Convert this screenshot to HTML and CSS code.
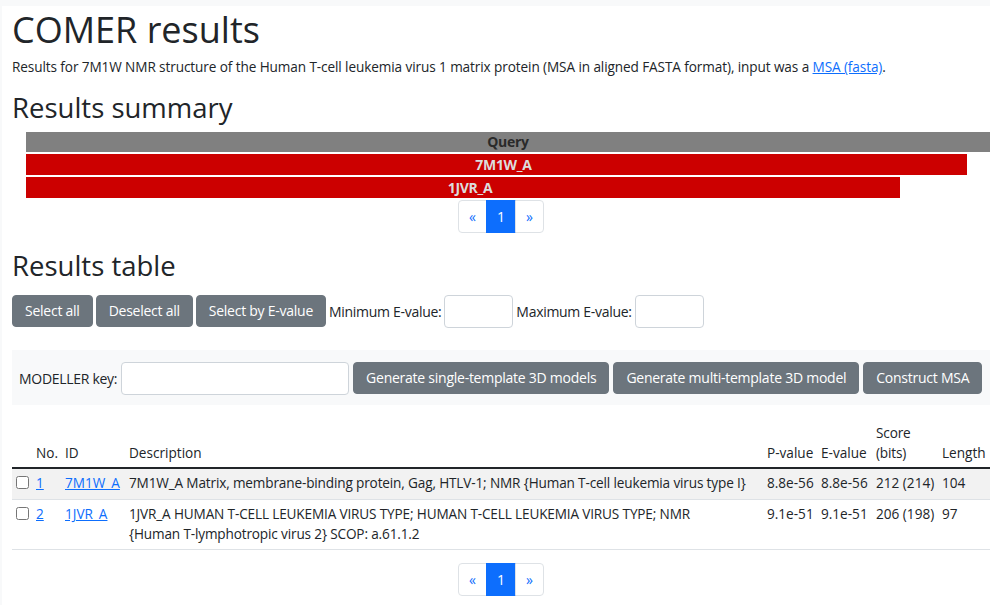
FILE: index.html
```html
<!DOCTYPE html>
<html lang="en">
<head>
<meta charset="utf-8">
<title>COMER results</title>
<link rel="stylesheet" href="styles.css">
</head>
<body>
<div class="page">
  <h1 class="title">COMER results</h1>
  <p class="intro">Results for 7M1W NMR structure of the Human T-cell leukemia virus 1 matrix protein (MSA in aligned FASTA format), input was a <a href="#">MSA (fasta)</a>.</p>

  <h2 class="section">Results summary</h2>
  <div class="summary">
    <div class="bar bar-query">Query</div>
    <div class="bar bar-hit" style="width:941px">7M1W_A</div>
    <div class="bar bar-hit" style="width:874px">1JVR_A</div>
  </div>
  <nav class="pager">
    <a class="pg" href="#">&laquo;</a><a class="pg active" href="#">1</a><a class="pg" href="#">&raquo;</a>
  </nav>

  <h2 class="section section-table">Results table</h2>
  <div class="select-row">
    <button class="btn">Select all</button>
    <button class="btn">Deselect all</button>
    <button class="btn">Select by E-value</button>
    <label class="lbl">Minimum E-value:</label>
    <input class="inp inp-sm" type="text">
    <label class="lbl">Maximum E-value:</label>
    <input class="inp inp-sm" type="text">
  </div>

  <div class="modeller">
    <label class="lbl">MODELLER key:</label>
    <input class="inp inp-key" type="text">
    <button class="btn">Generate single-template 3D models</button>
    <button class="btn">Generate multi-template 3D model</button>
    <button class="btn">Construct MSA</button>
  </div>

  <table class="results">
    <colgroup>
      <col class="c-chk"><col class="c-no"><col class="c-id"><col class="c-desc"><col class="c-p"><col class="c-e"><col class="c-score"><col class="c-len">
    </colgroup>
    <thead>
      <tr>
        <th></th><th>No.</th><th>ID</th><th>Description</th><th>P-value</th><th>E-value</th><th class="wrap">Score (bits)</th><th>Length</th>
      </tr>
    </thead>
    <tbody>
      <tr class="odd">
        <td><input type="checkbox" class="chk"></td>
        <td><a href="#">1</a></td>
        <td><a href="#">7M1W_A</a></td>
        <td class="wrap">7M1W_A Matrix, membrane-binding protein, Gag, HTLV-1; NMR {Human T-cell leukemia virus type I}</td>
        <td>8.8e-56</td><td>8.8e-56</td><td>212 (214)</td><td>104</td>
      </tr>
      <tr>
        <td><input type="checkbox" class="chk"></td>
        <td><a href="#">2</a></td>
        <td><a href="#">1JVR_A</a></td>
        <td class="wrap">1JVR_A HUMAN T-CELL LEUKEMIA VIRUS TYPE; HUMAN T-CELL LEUKEMIA VIRUS TYPE; NMR<br>{Human T-lymphotropic virus 2} SCOP: a.61.1.2</td>
        <td>9.1e-51</td><td>9.1e-51</td><td>206 (198)</td><td>97</td>
      </tr>
    </tbody>
  </table>
  <nav class="pager pager-bottom">
    <a class="pg" href="#">&laquo;</a><a class="pg active" href="#">1</a><a class="pg" href="#">&raquo;</a>
  </nav>
</div>
</body>
</html>
```
FILE: styles.css
```css
html, body {
  margin: 0;
  padding: 0;
  overflow: hidden;
  background: #f8f9fa;
}
body {
  font-family: "Open Sans", "Noto Sans", sans-serif;
  font-size: 14px;
  line-height: 1.5;
  color: #212529;
}
.page {
  margin: 6px 0 0 2px;
  background: #fff;
  padding: 0 0 20px 10px;
  min-height: 700px;
}
a { color: #0d6efd; }
.title {
  margin: 0;
  padding-top: 2px;
  font-size: 36px;
  font-weight: 500;
  line-height: 1.2;
}
.intro {
  margin: 6px 0 0;
  font-size: 13.6px;
  letter-spacing: -0.1px;
}
.section {
  margin: 13px 0 0;
  font-size: 27.5px;
  font-weight: 500;
  line-height: 1.2;
}
.section-table { margin-top: 16px; }
.summary {
  margin: 8px 0 0 14px;
  display: flex;
  flex-direction: column;
  gap: 2px;
}
.bar {
  height: 21px;
  line-height: 21px;
  text-align: center;
  font-weight: 700;
  font-size: 14px;
  letter-spacing: -0.3px;
  padding-left: 14px;
  box-sizing: border-box;
}
.bar-query {
  width: 964px;
  height: 20px;
  line-height: 20px;
  padding-left: 0;
  background: #808080;
  color: #2a2a2a;
}
.bar-hit {
  background: #cc0000;
  color: #ddd;
}
.pager {
  display: flex;
  justify-content: center;
  margin: 2px 0 0;
}
.pg {
  display: block;
  padding: 5px 10px;
  line-height: 21px;
  font-size: 14px;
  border: 1px solid #dee2e6;
  text-decoration: none;
  color: #0d6efd;
  margin-left: -1px;
}
.pg:first-child { border-radius: 4px 0 0 4px; margin-left: 0; }
.pg:last-child { border-radius: 0 4px 4px 0; }
.pg.active {
  background: #0d6efd;
  border-color: #0d6efd;
  color: #fff;
}
.select-row {
  margin-top: 13px;
  display: flex;
  align-items: center;
  gap: 3px;
}
.btn {
  font-family: inherit;
  font-size: 14px;
  letter-spacing: -0.25px;
  line-height: 20px;
  padding: 5px 12px;
  border: 1px solid #6c757d;
  border-radius: 4px;
  background: #6c757d;
  color: #fff;
  margin: 0;
  white-space: nowrap;
  flex-shrink: 0;
}
.lbl {
  font-size: 14px;
  letter-spacing: -0.3px;
  white-space: nowrap;
  flex-shrink: 0;
}
.inp {
  box-sizing: border-box;
  height: 33px;
  border: 1px solid #ced4da;
  border-radius: 4px;
  background: #fff;
  margin: 0;
  flex-shrink: 0;
}
.inp-sm { width: 69px; }
.modeller {
  margin-top: 22px;
  background: #f8f9fa;
  display: flex;
  align-items: center;
  gap: 4px;
  padding: 12px 7px 10px;
}
.inp-key { width: 228px; }
.results {
  margin-top: 14px;
  border-collapse: collapse;
  table-layout: fixed;
  width: 979px;
  font-size: 13.6px;
}
.c-chk { width: 20px; }
.c-no { width: 29px; }
.c-id { width: 64px; }
.c-desc { width: 638px; }
.c-p { width: 54px; }
.c-e { width: 55px; }
.c-score { width: 66px; }
.c-len { width: 53px; }
.results th, .results td {
  padding: 4px;
  text-align: left;
  vertical-align: top;
  white-space: nowrap;
}
.results .wrap {
  white-space: normal;
  letter-spacing: -0.15px;
}
.results th {
  font-weight: 400;
  vertical-align: bottom;
  border-bottom: 2px solid #212529;
}
.results td {
  border-bottom: 1px solid #dee2e6;
}
.results tr.odd td { background: #f2f2f2; }
.chk {
  margin: 3px 0 0 0;
  width: 13px;
  height: 13px;
}
.pager-bottom { margin-top: 13px; }
```
